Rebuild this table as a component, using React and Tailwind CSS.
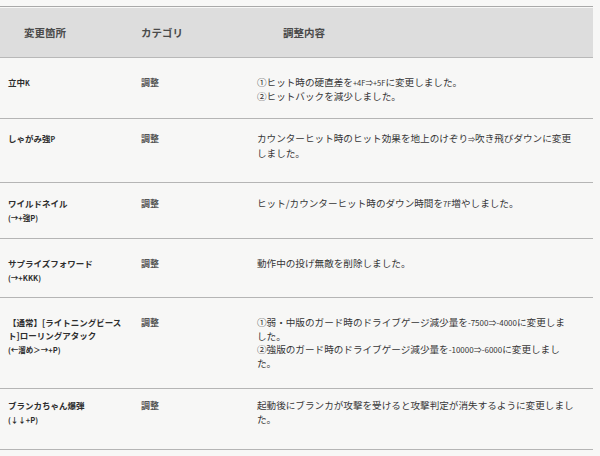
const rows = [
  {
    h: 'h-[61px]',
    pt: 'pt-[18px]',
    name: ['立中', <span key="k" className="text-[7px]">K</span>],
    lines: [
      <>①ヒット時の硬直差を<span className="text-[7.5px]">+4F⇒+5F</span>に変更しました。</>,
      '②ヒットバックを減少しました。',
    ],
  },
  {
    h: 'h-[64px]',
    pt: 'pt-[13px]',
    name: ['しゃがみ強', <span key="p" className="text-[7px]">P</span>],
    lines: [
      <>カウンターヒット時のヒット効果を地上のけぞり<span className="text-[7px]">⇒</span>吹き飛びダウンに変更</>,
      'しました。',
    ],
  },
  {
    h: 'h-[56px]',
    pt: 'pt-[14px]',
    name: ['ワイルドネイル'],
    sub: '(→+強P)',
    lines: [<>ヒット/カウンターヒット時のダウン時間を<span className="text-[7.5px]">7F</span>増やしました。</>],
  },
  {
    h: 'h-[59px]',
    pt: 'pt-[18px]',
    name: ['サプライズフォワード'],
    sub: '(→+KKK)',
    lines: ['動作中の投げ無敵を削除しました。'],
  },
  {
    h: 'h-[91px]',
    pt: 'pt-[18px]',
    name: ['【通常】[ライトニングビース', <br key="b" />, 'ト]ローリングアタック'],
    sub: '(←溜め＞→+P)',
    lines: [
      <>①弱・中版のガード時のドライブゲージ減少量を<span className="text-[8px]">-7500⇒-4000</span>に変更しま</>,
      'した。',
      <>②強版のガード時のドライブゲージ減少量を<span className="text-[8px]">-10000⇒-6000</span>に変更しまし</>,
      'た。',
    ],
  },
  {
    h: 'h-[61px]',
    pt: 'pt-[10px]',
    name: ['ブランカちゃん爆弾'],
    sub: '(↓↓+P)',
    lines: ['起動後にブランカが攻撃を受けると攻撃判定が消失するように変更しまし', 'た。'],
  },
]

export default function App() {
  return (
    <div
      className="h-[456px] w-[600px] overflow-hidden bg-[#f7f7f6] pt-[6px]"
      style={{ fontFamily: '"Noto Sans CJK JP", "Noto Sans", sans-serif' }}
    >
      <div className="w-[593px] border-t border-[#a9a9a9]">
        <div className="mt-px flex h-[50px] items-center border-b border-[#b8b8b8] bg-[#dddddd] text-[10.5px] font-bold text-[#4a4a4a]">
          <div className="w-[141px] pl-[24px]">変更箇所</div>
          <div className="w-[142px]">カテゴリ</div>
          <div>調整内容</div>
        </div>
        {rows.map((row, i) => (
          <div key={i} className={`flex border-b border-[#b5b5b5] ${row.h} ${row.pt}`}>
            <div className="w-[141px] pl-[8px] text-[8.5px] font-bold leading-[13px] text-[#2e2e2e]">
              <div className="whitespace-nowrap">{row.name}</div>
              {row.sub && <div className="mt-[2px] text-[7.5px] leading-[11px]">{row.sub}</div>}
            </div>
            <div className="w-[116px] text-[9px] font-bold leading-[13px] text-[#555]">調整</div>
            <div className="text-[9.6px] leading-[13.5px] text-[#363636]">
              {row.lines.map((line, j) => (
                <div key={j} className="whitespace-nowrap">{line}</div>
              ))}
            </div>
          </div>
        ))}
      </div>
    </div>
  )
}
